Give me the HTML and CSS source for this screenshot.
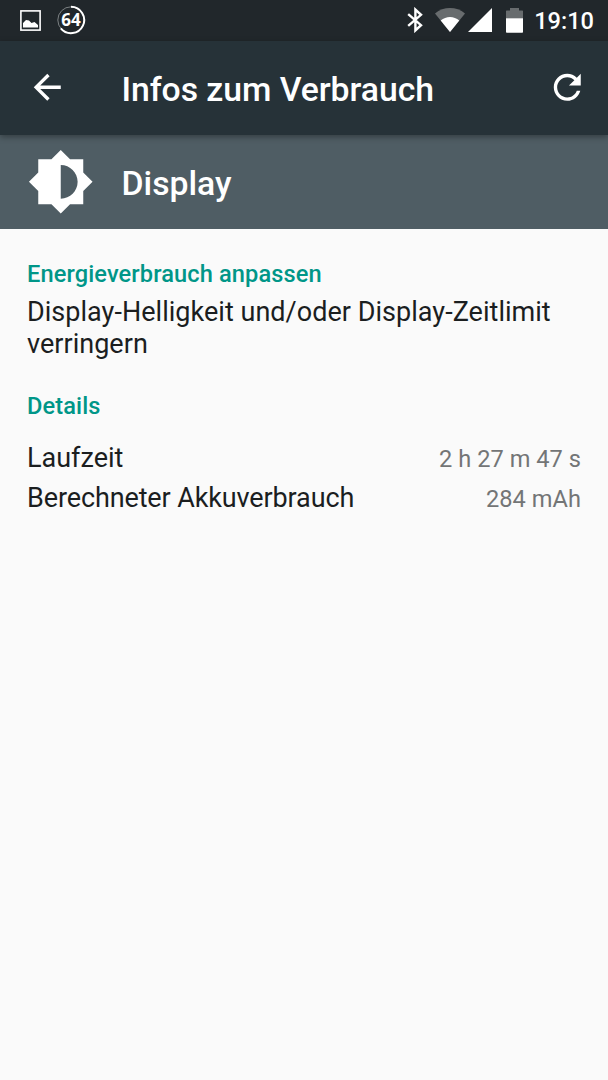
FILE: index.html
```html
<!DOCTYPE html>
<html lang="de">
<head>
    <meta charset="UTF-8">
    <meta name="viewport" content="width=device-width, initial-scale=1.0">
    <title>Infos zum Verbrauch</title>
    <link rel="stylesheet" href="styles.css">
</head>
<body>

<div class="statusbar">
    <svg class="picture-icon" width="21" height="21" viewBox="0 0 21 21">
        <rect x="0.9" y="0.9" width="19.2" height="19.2" fill="none" stroke="#fff" stroke-width="1.6"/>
        <path d="M3 17.5V13l3-3 3 .5 2.5 2.5 3-1 3.5 3v2.5z" fill="#fff"/>
    </svg>
    <div class="battery-level">
        <svg class="ring" width="30" height="30" viewBox="0 0 30 30">
            <circle cx="15" cy="15" r="13.2" fill="none" stroke="#7b8082" stroke-width="1"/>
            <path d="M15 1.8A13.2 13.2 0 1 1 4.8 23.4" fill="none" stroke="#fff" stroke-width="2"/>
        </svg>
        <span>64</span>
    </div>

    <div class="system-icons">
        <svg class="bluetooth" width="16" height="26" viewBox="0 0 16 26">
            <path d="M1.2 7.2 14 18.2 8.4 23.4V2.6L14 7.8 1.2 18.8" fill="none" stroke="#fff" stroke-width="2.4"/>
        </svg>
        <svg class="wifi" width="30" height="24" viewBox="0 0 30 24">
            <path d="M0 5.5C8.5-1.8 21.5-1.8 30 5.5L15 24z" fill="#686c6e"/>
            <path d="M5.7 12.6C11 7.9 19 7.9 24.3 12.6L15 24z" fill="#fff"/>
        </svg>
        <svg class="signal" width="24" height="24" viewBox="0 0 24 24">
            <path d="M24 0v24H0z" fill="#fff"/>
        </svg>
        <svg class="battery" width="17" height="25" viewBox="0 0 17 25">
            <path d="M0 3q0-.6.6-.6H4V0h9v2.4h3.4q.6 0 .6.6v7.5H0z" fill="#686c6e"/>
            <path d="M0 10.3h17V24q0 .8-.8.8H.8Q0 24.8 0 24z" fill="#fff"/>
        </svg>
        <span class="clock">19:10</span>
    </div>
</div>

<div class="toolbar">
    <svg class="icon" viewBox="0 0 24 24">
        <path d="M20 11H7.83l5.59-5.59L12 4l-8 8 8 8 1.41-1.41L7.83 13H20v-2z"/>
    </svg>
    <h1>Infos zum Verbrauch</h1>
    <svg class="icon refresh" viewBox="0 0 24 24">
        <path d="M17.65 6.35C16.2 4.9 14.21 4 12 4c-4.42 0-7.99 3.58-7.99 8s3.57 8 7.99 8c3.73 0 6.84-2.55 7.73-6h-2.08c-.82 2.33-3.04 4-5.65 4-3.31 0-6-2.69-6-6s2.69-6 6-6c1.66 0 3.14.69 4.22 1.78L13 11h7V4l-2.35 2.35z"/>
    </svg>
</div>

<div class="app-header">
    <svg class="app-icon" viewBox="0 0 24 24">
        <path d="M20 15.31L23.31 12 20 8.69V4h-4.69L12 .69 8.69 4H4v4.69L.69 12 4 15.31V20h4.69L12 23.31 15.31 20H20v-4.69zM12 18V6c3.31 0 6 2.69 6 6s-2.69 6-6 6z"/>
    </svg>
    <h2>Display</h2>
</div>

<div class="content">
    <h3>Energieverbrauch anpassen</h3>
    <p>Display-Helligkeit und/oder Display-Zeitlimit verringern</p>

    <h3 class="details">Details</h3>
    <div class="row">
        <span>Laufzeit</span>
        <span class="value">2 h 27 m 47 s</span>
    </div>
    <div class="row">
        <span class="label-long">Berechneter Akkuverbrauch</span>
        <span class="value">284 mAh</span>
    </div>
</div>

</body>
</html>
```
FILE: styles.css
```css
body {
    margin: 0;
    min-height: 1080px;
    font-family: Roboto, sans-serif;
    background-color: #fafafa;
    color: #1b1e1f;
}
svg {
    display: block;
    flex: none;
}
h1, h2, h3, p {
    margin: 0;
}
.statusbar {
    display: flex;
    align-items: center;
    box-sizing: border-box;
    height: 40.5px;
    padding: 0 14px 0 20px;
    background-color: #21272b;
    color: white;
}
.battery-level {
    display: grid;
    place-items: center;
    margin-left: 15px;
    font: bold 17px/24px "Open Sans", sans-serif;
}
.battery-level > * {
    grid-area: 1 / 1;
}
.system-icons {
    display: flex;
    align-items: center;
    margin-left: auto;
}
.wifi {
    margin-left: 12px;
}
.signal {
    margin-left: 3px;
}
.battery {
    margin-left: 14px;
}
.clock {
    margin-left: 11px;
    padding-top: 2px;
    font-size: 23.6px;
    font-weight: 500;
    line-height: 38px;
}
.toolbar {
    position: relative;
    display: flex;
    align-items: center;
    box-sizing: border-box;
    height: 94.5px;
    padding: 0 20.5px 0 27px;
    background-color: #263238;
    box-shadow: 0 2px 6px rgba(0, 0, 0, 0.35);
}
.icon {
    width: 40.5px;
    height: 40.5px;
    margin-bottom: 1px;
    fill: white;
}
.refresh {
    margin-left: auto;
}
h1, h2 {
    font-size: 33.75px;
    font-weight: 500;
    line-height: 40px;
    color: white;
}
h1 {
    margin: 4px 0 0 54px;
    letter-spacing: -0.05px;
}
.app-header {
    display: flex;
    align-items: center;
    height: 94px;
    padding-left: 27px;
    background-color: #4f5d64;
}
.app-icon {
    width: 67.5px;
    height: 67.5px;
    fill: white;
}
.app-header h2 {
    margin: 4px 0 0 27px;
}
.content {
    padding: 28.5px 27px;
}
h3 {
    font-size: 23.6px;
    font-weight: 500;
    line-height: 32px;
    letter-spacing: 0.12px;
    color: #009688;
}
p {
    margin-top: 6px;
    font-size: 27px;
    line-height: 32px;
    letter-spacing: 0.03px;
}
.details {
    margin: 30px 0 16px;
}
.row {
    display: flex;
    justify-content: space-between;
    align-items: baseline;
    height: 40px;
    font-size: 27px;
    line-height: 40px;
}
.label-long {
    letter-spacing: -0.12px;
}
.value {
    font-size: 23.6px;
    letter-spacing: 0.04px;
    color: #737576;
}
```
